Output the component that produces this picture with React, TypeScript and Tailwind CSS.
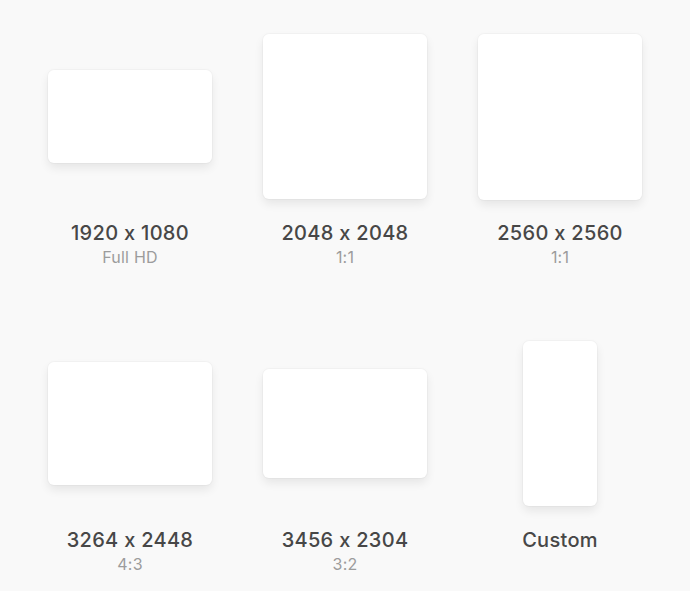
import React from "react";

type Item = { title: string; sub?: string; w: number; h: number };

const items: Item[] = [
  { title: "1920 x 1080", sub: "Full HD", w: 164, h: 93 },
  { title: "2048 x 2048", sub: "1:1", w: 164, h: 165 },
  { title: "2560 x 2560", sub: "1:1", w: 164, h: 166 },
  { title: "3264 x 2448", sub: "4:3", w: 164, h: 123 },
  { title: "3456 x 2304", sub: "3:2", w: 164, h: 109 },
  { title: "Custom", w: 74, h: 165 },
];

function Card({ item }: { item: Item }) {
  return (
    <div className="flex flex-col items-center">
      <div className="flex h-[167px] w-full items-center justify-center">
        <div
          className="rounded-[6px] bg-white shadow-[0_0_0_1px_rgba(0,0,0,0.025),0_5px_10px_rgba(0,0,0,0.08)]"
          style={{ width: item.w, height: item.h }}
        />
      </div>
      <div className="mt-[21px] text-[20px] leading-[24px] font-medium tracking-[0.3px] text-[#474747]">
        {item.title}
      </div>
      {item.sub && (
        <div className="mt-[3px] text-[16px] leading-[19px] tracking-[0.2px] text-[#9c9c9c]">{item.sub}</div>
      )}
    </div>
  );
}

export default function App() {
  return (
    <div
      className="h-[591px] w-[690px] bg-[#f9f9f9] pl-[22.5px] pt-[33px]"
      style={{ fontFamily: "Inter, 'Open Sans', sans-serif" }}
    >
      <div className="grid w-[645px] grid-cols-3 gap-y-[73px]">
        {items.map((it) => (
          <Card key={it.title} item={it} />
        ))}
      </div>
    </div>
  );
}
